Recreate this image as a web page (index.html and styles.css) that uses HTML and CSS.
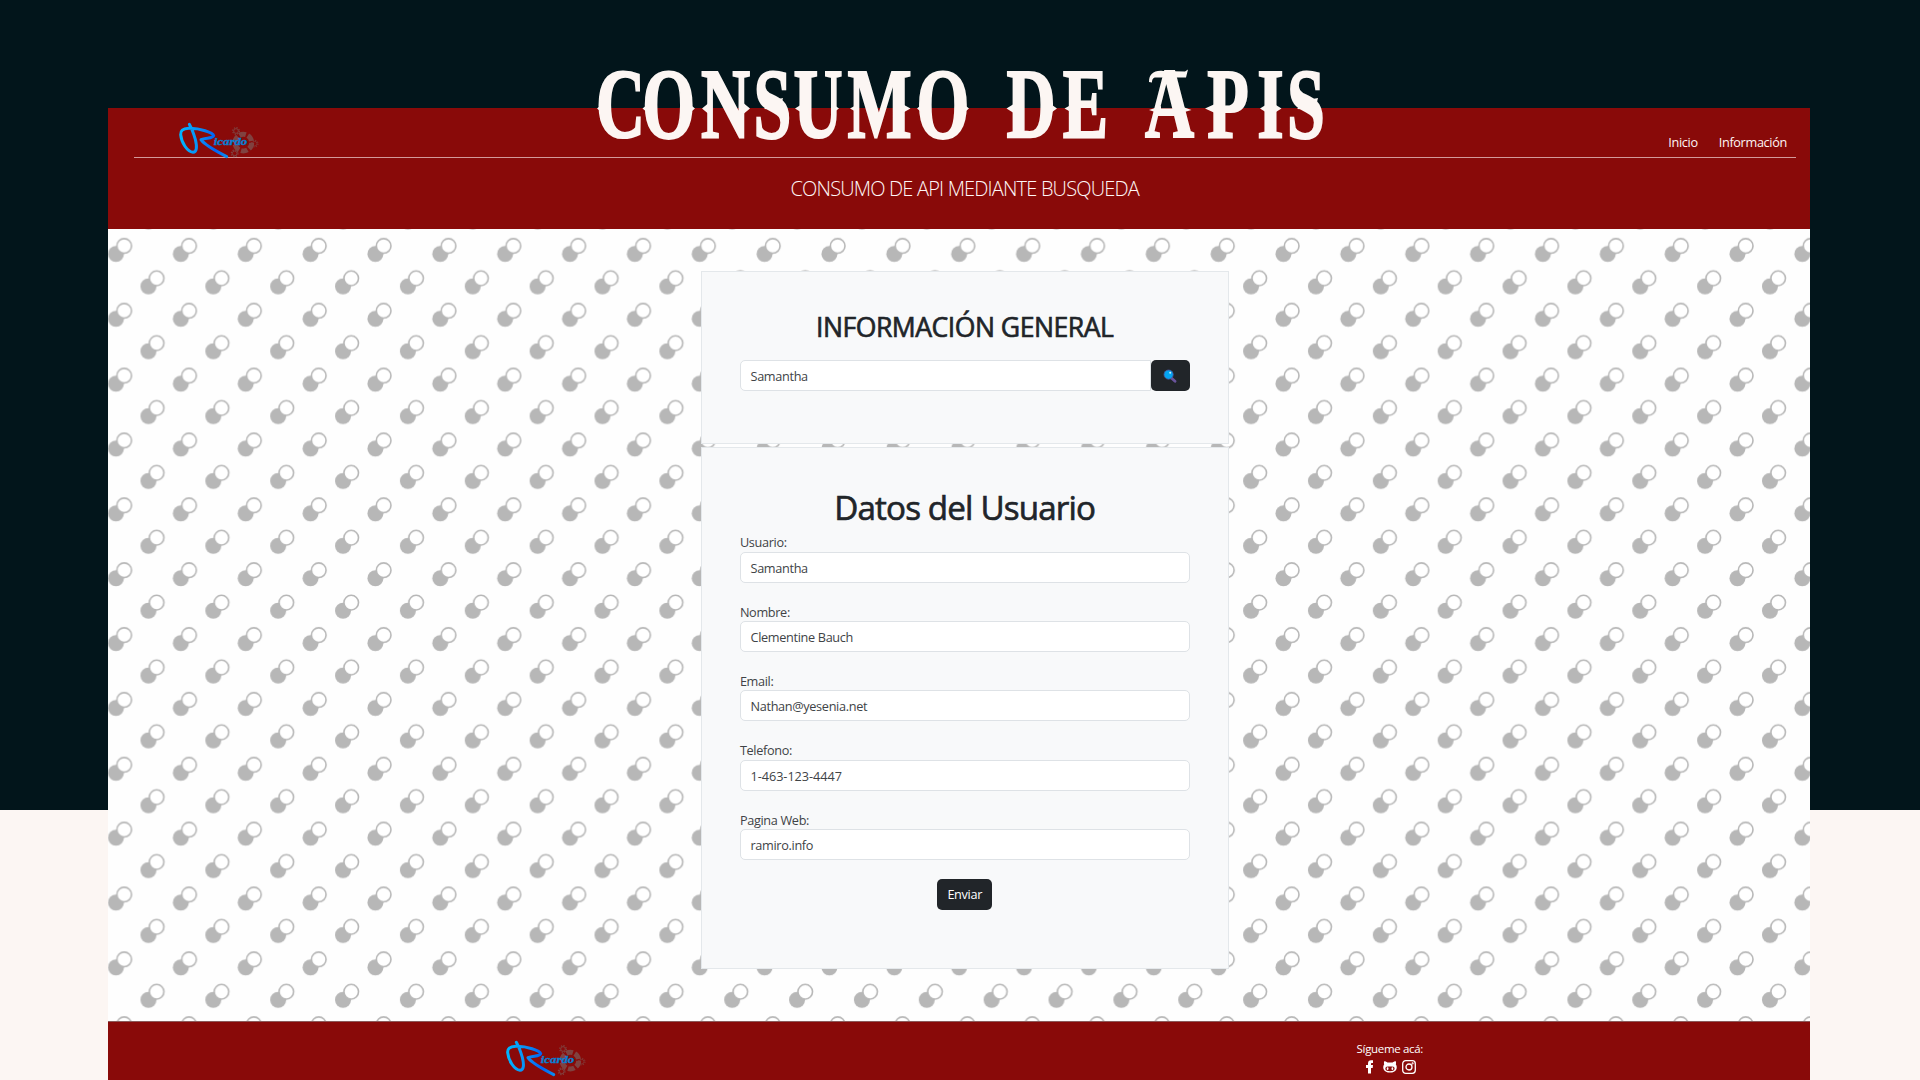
FILE: index.html
```html
<!DOCTYPE html>
<html lang="es">
<head>
<meta charset="utf-8">
<title>Consumo de APIs</title>
<link rel="stylesheet" href="styles.css">
</head>
<body>
<svg class="defs" width="0" height="0" aria-hidden="true">
  <defs>
    <linearGradient id="ink" x1="0" y1="0" x2="1" y2="0">
      <stop offset="0" stop-color="#00b4ff"/>
      <stop offset=".45" stop-color="#0a8af5"/>
      <stop offset=".75" stop-color="#0062f5"/>
      <stop offset="1" stop-color="#0a8cf0"/>
    </linearGradient>
    <symbol id="logo" viewBox="225 60 260 120">
      <g fill="none" stroke="#7f504e" opacity=".8">
        <circle cx="430" cy="128" r="25" stroke-width="15" stroke-dasharray="20 6.2"/>
        <circle cx="408" cy="93" r="7" stroke-width="3"/>
        <circle cx="408" cy="93" r="10" stroke-width="3.500" stroke-dasharray="4 3.850"/>
        <circle cx="464" cy="131" r="7" stroke-width="3" opacity=".7"/>
        <circle cx="464" cy="131" r="10" stroke-width="3.500" stroke-dasharray="4 3.850" opacity=".7"/>
        <circle cx="404" cy="160" r="7" stroke-width="3"/>
        <circle cx="404" cy="160" r="10" stroke-width="3.500" stroke-dasharray="4 3.850"/>
      </g>
      <path d="M268 73C275 85 280 98 286 118C292 142 290 157 279 157C262 155 244 128 242 104C241 92 248 86 266 85C300 84 338 98 341 107C339 116 318 113 303 119C314 135 345 152 380 170" fill="none" stroke="url(#ink)" stroke-width="9" stroke-linecap="round" stroke-linejoin="round"/>
      <text class="logo-text" x="341" y="135" textLength="101" lengthAdjust="spacingAndGlyphs">icardo</text>
    </symbol>
    <pattern id="dots" width="64.86" height="64.86" patternUnits="userSpaceOnUse" x="-24.4" y="-7.2">
      <g fill="#b7b7b7">
        <circle cx="32.4" cy="32.2" r="8"/>
        <circle cx="64.86" cy="64.6" r="8"/>
        <circle cx="0" cy="64.6" r="8"/>
        <circle cx="64.86" cy="-.26" r="8"/>
        <circle cx="0" cy="-.26" r="8"/>
      </g>
      <g fill="#fff" stroke="#b7b7b7" stroke-width="1.6">
        <circle cx="40.6" cy="24.1" r="7.3"/>
        <circle cx="8.2" cy="56.5" r="7.3"/>
      </g>
    </pattern>
  </defs>
</svg>

<main class="page">
  <header class="header">
    <nav class="nav">
      <svg class="logo" role="img" aria-label="Ricardo"><use href="#logo"/></svg>
      <div class="links"><a>Inicio</a><a>Información</a></div>
    </nav>
    <p class="subtitle">CONSUMO DE API MEDIANTE BUSQUEDA</p>
  </header>

  <section class="content">
    <svg class="backdrop" aria-hidden="true"><rect width="100%" height="100%" fill="url(#dots)"/></svg>
    <div class="card search-card">
      <h2>INFORMACIÓN GENERAL</h2>
      <div class="search">
        <div class="input">Samantha</div>
        <div class="button search-button">
          <svg width="14" height="14" viewBox="0 0 14 14"><path d="M8.4 9l3.6 3.2" stroke="#6a549c" stroke-width="2.8" stroke-linecap="round"/><circle cx="5.6" cy="5.6" r="4.6" fill="#03a4f2" stroke="#4c55a0" stroke-width=".8"/><circle cx="7.2" cy="3.8" r="1" fill="#c9f1ff"/></svg>
        </div>
      </div>
    </div>
    <div class="card user-card">
      <h1>Datos del Usuario</h1>
      <div class="field"><span class="label">Usuario:</span><div class="input">Samantha</div></div>
      <div class="field"><span class="label">Nombre:</span><div class="input">Clementine Bauch</div></div>
      <div class="field"><span class="label">Email:</span><div class="input">Nathan@yesenia.net</div></div>
      <div class="field"><span class="label">Telefono:</span><div class="input phone">1-463-123-4447</div></div>
      <div class="field"><span class="label">Pagina Web:</span><div class="input">ramiro.info</div></div>
      <div class="button submit">Enviar</div>
    </div>
  </section>

  <footer class="footer">
    <svg class="logo" role="img" aria-label="Ricardo"><use href="#logo"/></svg>
    <div class="social">
      <span>Sígueme acá:</span>
      <div class="icons">
        <svg width="14" height="14" viewBox="0 0 14 14"><path d="M5 13.500V8H3V5h2V3.600C5 1.200 6.200 .2 8 .2h2v2.900H8.900C8.200 3.100 8 3.400 8 4v1h2L9.700 8H8v5.500z" fill="#fff"/></svg>
        <svg width="14" height="14" viewBox="0 0 14 14"><path fill-rule="evenodd" d="M1.200 1.200C2.500 1.200 3.700 1.900 4.400 2.500h5.200c.7-.6 1.900-1.300 3.200-1.300.4 1.200.3 2.300 0 3 1.100 1.500 1.200 3.300.6 5C12.500 11.800 10 12.500 7 12.500S1.500 11.800.6 9.200C0 7.500.1 5.700 1.200 4.200c-.3-.7-.4-1.800 0-3zM3.600 6.800C2 7.300 1.900 10 3.800 10.800c1.700.6 4.700.6 6.400 0 1.900-.8 1.800-3.500.2-4-1.500-.3-5.300-.3-6.800 0z" fill="#fff"/><ellipse cx="4.600" cy="8.700" rx=".9" ry="1.400" fill="#fff"/><ellipse cx="9.400" cy="8.700" rx=".9" ry="1.400" fill="#fff"/></svg>
        <svg width="14" height="14" viewBox="0 0 14 14" fill="none" stroke="#fff" stroke-width="1.300"><rect x=".7" y=".7" width="12.600" height="12.600" rx="3"/><circle cx="7" cy="7" r="3"/><circle cx="10.600" cy="3.400" r=".4"/></svg>
      </div>
    </div>
  </footer>
</main>

<svg class="title" viewBox="580 20 760 170" role="heading" aria-level="1">
  <text class="title-text" transform="scale(.68 1)" y="136.800" x="912.500 983.4 1067 1136 1203 1293.400 1386.800 1450 1516.200 1596.300 1650 1719.900 1806 1868.500 1920.600">CONSUMO DE APIS</text>
  <path class="spurs" d="M597 108.500l6-5v10zM642.500 108.500l6-5v10zM695 108.500l-6-5v10zM702 108.500l6-5v10zM750 108.500l-6-5v10zM764 109l10-9 9-2-3 12zM795 108.500l8-5v10zM839 108.500l-7-5v10zM850 108.500l9-5v10zM910.500 108.500l-9-5v10zM917 108.500l6-5v10zM969 108.500l-6-5v10zM1006.500 108.500l8-5v10zM1057 108.500l-7-5v10zM1064.500 108.500l9-5v10zM1149 110l12-4v8zM1191.500 110l-14-5v9zM1205 108.500l11-5v10zM1260 108.500l8-5v10zM1281.500 108.500l-8-5v10zM1297 109l10-9 11-2-3 12zM1149 82c0-8 5-12 14-11l22 .500 3-2-2 8h-30c-3 0-4 2-4 5z"/>
</svg>
</body>
</html>
```
FILE: styles.css
```css
* { box-sizing: border-box; }

body {
  margin: 0;
  width: 1920px;
  height: 1080px;
  overflow: hidden;
  position: relative;
  background: linear-gradient(#02151b 810px, #fcf6f3 810px);
  font: 12.7px/20px "Open Sans", "Noto Sans", sans-serif;
  letter-spacing: -.33px;
  color: #404346;
}

.defs { position: absolute; }

.page {
  width: 1702px;
  height: 972px;
  margin: 108px 110px 0 108px;
  display: flex;
  flex-direction: column;
  background: #890a09;
}

.header {
  height: 120.600px;
  padding: 0 14px 0 25.500px;
  color: #fff6f6;
}

.nav {
  height: 50px;
  border-bottom: 1px solid #d39a9a;
  display: flex;
  justify-content: space-between;
}

.logo { width: 86.700px; height: 40px; display: block; }
.nav .logo { margin: 12px 0 0 41.500px; }

.links {
  display: flex;
  gap: 21px;
  padding: 24px 9px 0 0;
}

.logo-text {
  font: italic bold 29px "Liberation Serif", serif;
  letter-spacing: 0;
  fill: #087fd3;
  stroke: #087fd3;
  stroke-width: 1;
}

.subtitle {
  margin: 17px 0 0;
  text-align: center;
  font-size: 20px;
  line-height: 28px;
  font-weight: 300;
  letter-spacing: -.82px;
}

.content {
  position: relative;
  height: 792.400px;
  background: #fefefe;
  display: flex;
  flex-direction: column;
  align-items: center;
  padding-top: 42.400px;
  gap: 3.400px;
}

.backdrop { position: absolute; inset: 0; width: 100%; height: 100%; }

.card {
  position: relative;
  width: 528px;
  margin-left: 11px;
  padding: 0 37.600px 0 38px;
  background: #f8f9fa;
  border: 1px solid #e4e8eb;
}

.search-card { height: 172.600px; }
.user-card { height: 522px; display: flex; flex-direction: column; }

h1, h2 {
  margin: 0;
  text-align: center;
  font-weight: 500;
  color: #212529;
  -webkit-text-stroke: .65px #212529;
}

h2 {
  padding-top: 39px;
  font-size: 26.600px;
  line-height: 32px;
  letter-spacing: -.5px;
}

h1 {
  padding-top: 40px;
  font-size: 33.200px;
  line-height: 40px;
  letter-spacing: -.85px;
}

.search { display: flex; margin-top: 17.200px; }
.search .input { flex: 1; border-radius: 5px 0 0 5px; }

.input {
  height: 31px;
  padding: 5px 10px;
  border: 1px solid #dee2e6;
  border-radius: 5px;
  background: #fff;
}

.phone { letter-spacing: -.05px; }

.button {
  background: #212529;
  border-radius: 5px;
  display: flex;
  align-items: center;
  justify-content: center;
}

.search-button { width: 39px; height: 31px; }

.field { height: 69.300px; padding-top: 4.400px; }
.label { display: block; height: 19.400px; padding-left: .4px; }

.submit {
  width: 55.500px;
  height: 31px;
  margin-top: 4.500px;
  align-self: center;
  color: #fff;
}

.footer {
  height: 59px;
  border-top: 1px solid #8a5a5a;
  padding: 0 387px 0 393.600px;
  display: flex;
  justify-content: space-between;
  color: #fff;
}

.footer .logo { margin-top: 15.600px; }

.social {
  padding-top: 17px;
  font-size: 11.500px;
  display: flex;
  flex-direction: column;
  align-items: center;
}

.icons { display: flex; gap: 5.500px; margin-top: 1.500px; }

.title {
  position: absolute;
  left: 580px;
  top: 20px;
  width: 760px;
  height: 170px;
}

.title-text {
  font: bold 100px "Liberation Serif", serif;
  letter-spacing: 0;
  text-anchor: middle;
  fill: #fcf6f3;
  stroke: #fcf6f3;
  stroke-width: 2.200;
}

.spurs { fill: #fcf6f3; }
```
